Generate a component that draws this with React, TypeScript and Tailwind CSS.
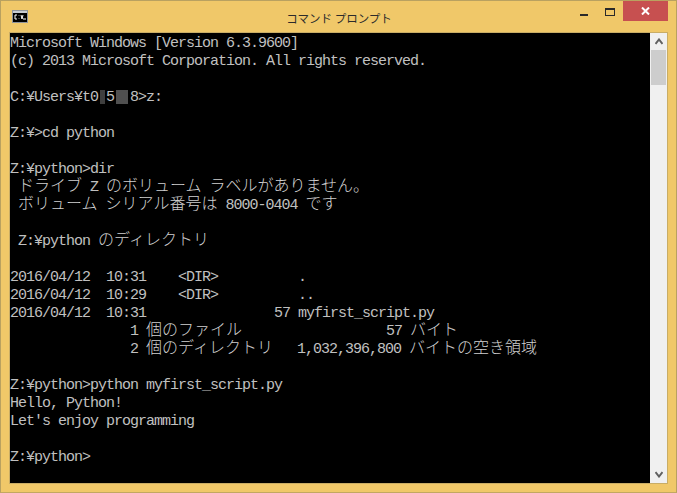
// Command prompt window, Windows 8 style with a yellow frame
import React from "react";

const LINES: string[] = [
  "Microsoft Windows [Version 6.3.9600]",
  "(c) 2013 Microsoft Corporation. All rights reserved.",
  "",
  "C:¥Users¥t0#5@8>z:",
  "",
  "Z:¥>cd python",
  "",
  "Z:¥python>dir",
  " ドライブ Z のボリューム ラベルがありません。",
  " ボリューム シリアル番号は 8000-0404 です",
  "",
  " Z:¥python のディレクトリ",
  "",
  "2016/04/12  10:31    <DIR>          .",
  "2016/04/12  10:29    <DIR>          ..",
  "2016/04/12  10:31                57 myfirst_script.py",
  "               1 個のファイル                  57 バイト",
  "               2 個のディレクトリ   1,032,396,800 バイトの空き領域",
  "",
  "Z:¥python>python myfirst_script.py",
  "Hello, Python!",
  "Let's enjoy programming",
  "",
  "Z:¥python>",
];

const ConsoleLine = ({ text }: { text: string }) => {
  // wide characters take two cells, '#' and '@' mark blurred out cells
  const parts = text.split(/([\u3000-\u9fff]+|#|@)/).filter(Boolean);
  return (
    <div className="h-[18px] leading-[18px] whitespace-pre">
      {parts.map((part, i) =>
        part === "#" ? (
          <span
            key={i}
            className="inline-block w-[8px] h-[14px] pl-[2px] pr-[1px] bg-[#3f3f3f] bg-clip-content align-[-3px]"
          />
        ) : part === "@" ? (
          <span
            key={i}
            className="inline-block w-[16px] h-[14px] pl-[2px] pr-[2px] bg-[#505050] bg-clip-content align-[-3px]"
          />
        ) : /[\u3000-\u9fff]/.test(part) ? (
          <span
            key={i}
            className="font-['Noto_Sans_CJK_JP',sans-serif] text-[16px] leading-[0] font-light tracking-normal text-[#d0d0d0]"
          >
            {part}
          </span>
        ) : (
          <span key={i}>{part}</span>
        )
      )}
    </div>
  );
};

const ConsoleIcon = () => (
  <svg width="16" height="13" viewBox="0 0 16 13" className="shrink-0">
    <rect x="0" y="0" width="16" height="13" fill="#8f949c" />
    <rect x="1" y="1" width="14" height="2" fill="#c8ccd2" />
    <rect x="1" y="3" width="14" height="9" fill="#000" />
    <path d="M5 5H3V9H5M7 5.5V6M7 8V8.5M9 5L10 9L11 5M11 9H14" fill="none" stroke="#fff" strokeWidth="1" />
  </svg>
);

export default function App() {
  return (
    <div className="w-[677px] h-[493px] flex flex-col bg-[#f0c869] border border-[#b9a160] border-b-[#c2a861] overflow-hidden">
      {/* Title bar */}
      <div className="h-[31px] shrink-0 flex items-start relative">
        <div className="mt-[9px] ml-[11px]">
          <ConsoleIcon />
        </div>
        <div className="flex-1 text-center pt-[7px] pl-[79px] text-[11.5px] leading-[20px] text-[#2b2b2b] font-['Noto_Sans_CJK_JP',sans-serif]">
          コマンド プロンプト
        </div>
        <div className="flex items-start mr-[8px]">
          <div className="w-[26px] h-[20px] flex items-center justify-center">
            <div className="w-[8px] h-[2px] mt-[7px] bg-[#2a2a2a]" />
          </div>
          <div className="w-[26px] h-[20px] flex items-center justify-center">
            <div className="w-[10px] h-[8px] mt-[2px] border border-t-2 border-[#2a2a2a]" />
          </div>
          <div className="w-[45px] h-[20px] bg-[#c75050] flex items-center justify-center">
            <svg width="9" height="8" viewBox="0 0 9 8">
              <path d="M1 0.5L8 7.5M8 0.5L1 7.5" stroke="#fff" strokeWidth="2" />
            </svg>
          </div>
        </div>
      </div>

      {/* Console area */}
      <div className="flex-1 min-h-0 mx-[8px] mb-[8px] flex border border-[#c9ad66]">
        <div className="flex-1 bg-black text-[#c0c0c0] pt-[2px] font-['Liberation_Mono',monospace] text-[15px] tracking-[-1px] overflow-hidden">
          {LINES.map((line, i) => (
            <ConsoleLine key={i} text={line} />
          ))}
        </div>

        {/* Scrollbar */}
        <div className="w-[17px] shrink-0 bg-[#f0f0f0] flex flex-col items-center">
          <div className="h-[17px] w-full flex items-center justify-center">
            <svg width="8" height="7" viewBox="0 0 8 7">
              <path d="M0.5 6L4 1.5L7.5 6" fill="none" stroke="#606060" strokeWidth="2" />
            </svg>
          </div>
          <div className="w-[15px] h-[35px] bg-[#cdcdcd]" />
          <div className="flex-1" />
          <div className="h-[17px] w-full flex items-center justify-center">
            <svg width="8" height="7" viewBox="0 0 8 7">
              <path d="M0.5 1L4 5.5L7.5 1" fill="none" stroke="#606060" strokeWidth="2" />
            </svg>
          </div>
        </div>
      </div>
    </div>
  );
}
